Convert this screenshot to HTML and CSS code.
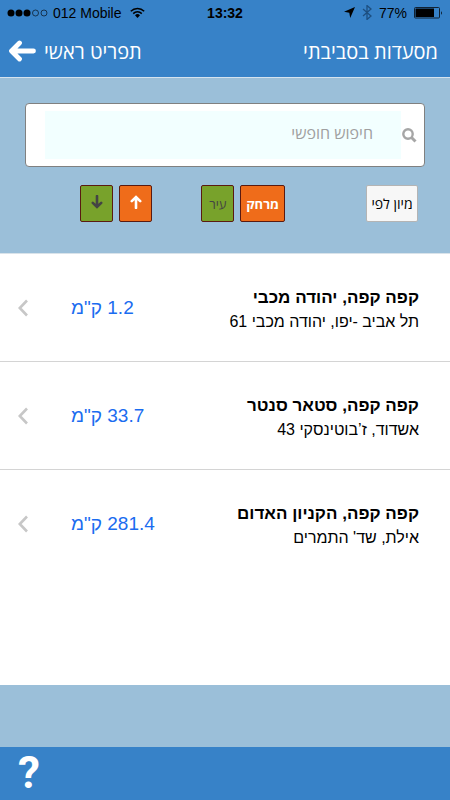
FILE: index.html
```html
<!DOCTYPE html>
<html lang="he" dir="rtl">
<head>
    <meta charset="UTF-8">
    <meta name="viewport" content="width=device-width, initial-scale=1.0">
    <title>מסעדות בסביבתי</title>
    <link rel="stylesheet" href="styles.css">
</head>
<body>
    <header class="header">
        <div class="status-bar" dir="ltr">
            <div class="status-left">
                <svg width="42" height="8" viewBox="0 0 42 8">
                    <circle cx="4" cy="4" r="3.5"/>
                    <circle cx="12" cy="4" r="3.5"/>
                    <circle cx="20" cy="4" r="3.5"/>
                    <circle cx="28.500" cy="4" r="3" fill="none" stroke="#000" stroke-width=".6"/>
                    <circle cx="37" cy="4" r="3" fill="none" stroke="#000" stroke-width=".6"/>
                </svg>
                <span>012 Mobile</span>
                <svg class="wifi" width="15" height="11" viewBox="0 0 15 11">
                    <path d="M.8 4.200a9.500 9.500 0 0 1 13.400 0M3.200 6.600a6.100 6.100 0 0 1 8.600 0" fill="none" stroke="#000" stroke-width="1.500"/>
                    <path d="M5 8.300a3.500 3.500 0 0 1 5 0L7.500 11z"/>
                </svg>
            </div>
            <span class="clock">13:32</span>
            <div class="status-right">
                <svg width="11" height="11" viewBox="0 0 11 11"><path d="M11 0L6.200 11L5.300 5.700L0 4.800z"/></svg>
                <svg width="10" height="15" viewBox="0 0 10 15"><path d="M1 4l8 7-4 3.500V.5L9 4l-8 7" fill="none" stroke="#1d4f80" stroke-width="1.300"/></svg>
                <span>77%</span>
                <svg width="29" height="12" viewBox="0 0 29 12">
                    <rect x=".5" y=".5" width="25" height="10.500" rx="1" fill="none" stroke="#123"/>
                    <rect x="1.500" y="1.500" width="18.500" height="8.500"/>
                    <path d="M27 4q1.800 2 0 4z"/>
                </svg>
            </div>
        </div>
        <nav class="nav-bar">
            <h1>מסעדות בסביבתי</h1>
            <a class="back" href="#">
                תפריט ראשי
                <svg width="28" height="22" viewBox="0 0 28 22"><path d="M25.500 11H4M11.500 3L3.500 11l8 8" fill="none" stroke="#fff" stroke-width="4.800" stroke-linecap="round" stroke-linejoin="round"/></svg>
            </a>
        </nav>
    </header>

    <section class="search">
        <div class="search-box">
            <svg width="15" height="15" viewBox="0 0 15 15"><circle cx="6" cy="6" r="4.700" fill="none" stroke="#a6a6a6" stroke-width="2.400"/><path d="M9.500 9.500l4 4" stroke="#a6a6a6" stroke-width="3"/></svg>
            <input type="text" placeholder="חיפוש חופשי" aria-label="חיפוש חופשי">
        </div>
        <div class="sort">
            <span class="sort-label">מיון לפי</span>
            <div class="sort-group sort-by">
                <button class="btn active" type="button">מרחק</button>
                <button class="btn" type="button">עיר</button>
            </div>
            <div class="sort-group">
                <button class="btn arrow active" type="button" aria-label="סדר עולה">
                    <svg width="12" height="14" viewBox="0 0 12 14"><path d="M6 13V2.500M1.800 6.200L6 2 10.200 6.200" fill="none" stroke="#fff" stroke-width="2.600" stroke-linecap="round"/></svg>
                </button>
                <button class="btn arrow" type="button" aria-label="סדר יורד">
                    <svg width="12" height="14" viewBox="0 0 12 14"><path d="M6 1V11.500M1.800 7.800L6 12 10.200 7.800" fill="none" stroke="#444" stroke-width="2.600" stroke-linecap="round"/></svg>
                </button>
            </div>
        </div>
    </section>

    <main class="results">
        <a class="result" href="#">
            <div class="place">
                <h2>קפה קפה, יהודה מכבי</h2>
                <p>תל אביב -יפו, יהודה מכבי 61</p>
            </div>
            <span class="distance">1.2 ק"מ</span>
            <svg class="chevron" width="10" height="18" viewBox="0 0 10 18"><path d="M9 1.500L1.800 9 9 16.500" fill="none" stroke="#c7c7c7" stroke-width="2.600"/></svg>
        </a>
        <a class="result" href="#">
            <div class="place">
                <h2>קפה קפה, סטאר סנטר</h2>
                <p>אשדוד, ז’בוטינסקי 43</p>
            </div>
            <span class="distance">33.7 ק"מ</span>
            <svg class="chevron" width="10" height="18" viewBox="0 0 10 18"><path d="M9 1.500L1.800 9 9 16.500" fill="none" stroke="#c7c7c7" stroke-width="2.600"/></svg>
        </a>
        <a class="result" href="#">
            <div class="place">
                <h2>קפה קפה, הקניון האדום</h2>
                <p>אילת, שד' התמרים</p>
            </div>
            <span class="distance">281.4 ק"מ</span>
            <svg class="chevron" width="10" height="18" viewBox="0 0 10 18"><path d="M9 1.500L1.800 9 9 16.500" fill="none" stroke="#c7c7c7" stroke-width="2.600"/></svg>
        </a>
    </main>

    <footer class="footer">
        <button class="help" type="button" aria-label="עזרה">?</button>
    </footer>
</body>
</html>
```
FILE: styles.css
```css
* {
    box-sizing: border-box;
}
body {
    margin: 0;
    min-height: 100vh;
    display: flex;
    flex-direction: column;
    font-family: "Liberation Sans", Arial, sans-serif;
    background-color: #9bbfd9;
    color: #000;
}
h1, h2, p {
    margin: 0;
}
a {
    color: inherit;
    text-decoration: none;
}
.header {
    background-color: #3782c8;
    border-bottom: 1px solid #d5e3ef;
}
.status-bar {
    display: grid;
    grid-template-columns: 1fr auto 1fr;
    align-items: center;
    height: 25px;
    padding: 0 7px;
    font-size: 14px;
}
.status-left, .status-right {
    display: flex;
    align-items: center;
    gap: 4px;
}
.status-right {
    justify-content: flex-end;
    gap: 7px;
}
.wifi {
    margin-left: 4px;
}
.clock {
    font-weight: bold;
}
.nav-bar {
    display: flex;
    justify-content: space-between;
    align-items: center;
    height: 52px;
    padding: 0 12px 0 8px;
    color: #fff;
    font-family: "Open Sans", "Liberation Sans", sans-serif;
    font-size: 20px;
}
.nav-bar h1 {
    font-size: 20px;
    font-weight: normal;
}
.back {
    display: flex;
    align-items: center;
    gap: 8px;
}
.search {
    padding: 25px 25px 31px;
    border-bottom: 1px solid #d9e3ea;
}
.search-box {
    display: flex;
    align-items: center;
    gap: 1px;
    height: 64px;
    padding: 0 7px 0 19px;
    background-color: #fff;
    border: 1px solid #808080;
    border-radius: 4px;
}
.search-box input {
    flex: 1;
    min-width: 0;
    height: 48px;
    padding: 0 28px 4px 10px;
    border: none;
    background-color: #f2ffff;
    font-family: "Open Sans", "Liberation Sans", sans-serif;
    font-size: 16px;
}
.search-box input::placeholder {
    color: #a0a0a0;
}
.sort {
    display: flex;
    margin-top: 18px;
    padding-right: 7px;
    font-family: "Open Sans", "Liberation Sans", sans-serif;
    font-size: 14px;
}
.sort-label {
    width: 52px;
    height: 37px;
    line-height: 35px;
    text-align: center;
    white-space: nowrap;
    background-color: #f7f7f7;
    border: 1px solid #b4b4b4;
    border-radius: 2px;
}
.sort-group {
    display: flex;
    gap: 6px;
}
.sort-by {
    margin: 0 81px 0 49px;
}
.btn {
    display: flex;
    align-items: center;
    justify-content: center;
    min-width: 33px;
    height: 37px;
    padding: 0 5px;
    border: 1px solid #5a1a10;
    border-radius: 2px;
    background-color: #78a22b;
    color: #444;
    font-family: inherit;
    font-size: 13px;
}
.btn.active {
    background-color: #ef6c1a;
    color: #fff;
    font-weight: bold;
}
.btn.arrow {
    padding-bottom: 4px;
}
.results {
    flex: 1;
    background-color: #fff;
}
.result {
    display: flex;
    align-items: center;
    height: 108px;
    padding: 0 31px 0 18px;
    border-bottom: 1px solid #d4d4d4;
}
.result:last-child {
    border-bottom: none;
}
.place {
    flex: 1;
    padding-top: 4px;
}
.place h2 {
    font-size: 17px;
    line-height: 24px;
}
.place p {
    font-size: 16px;
    line-height: 24px;
}
.distance {
    width: 120px;
    font-size: 19px;
    color: #1a6cf0;
    text-align: left;
}
.chevron {
    margin-right: 43px;
}
.footer {
    margin-top: 62px;
    padding: 0 18px;
    background-color: #3782c8;
    text-align: left;
}
.help {
    height: 53px;
    padding: 0;
    border: none;
    background: none;
    color: #fff;
    font-family: Roboto, sans-serif;
    font-size: 44px;
    font-weight: bold;
    line-height: 53px;
}
```
